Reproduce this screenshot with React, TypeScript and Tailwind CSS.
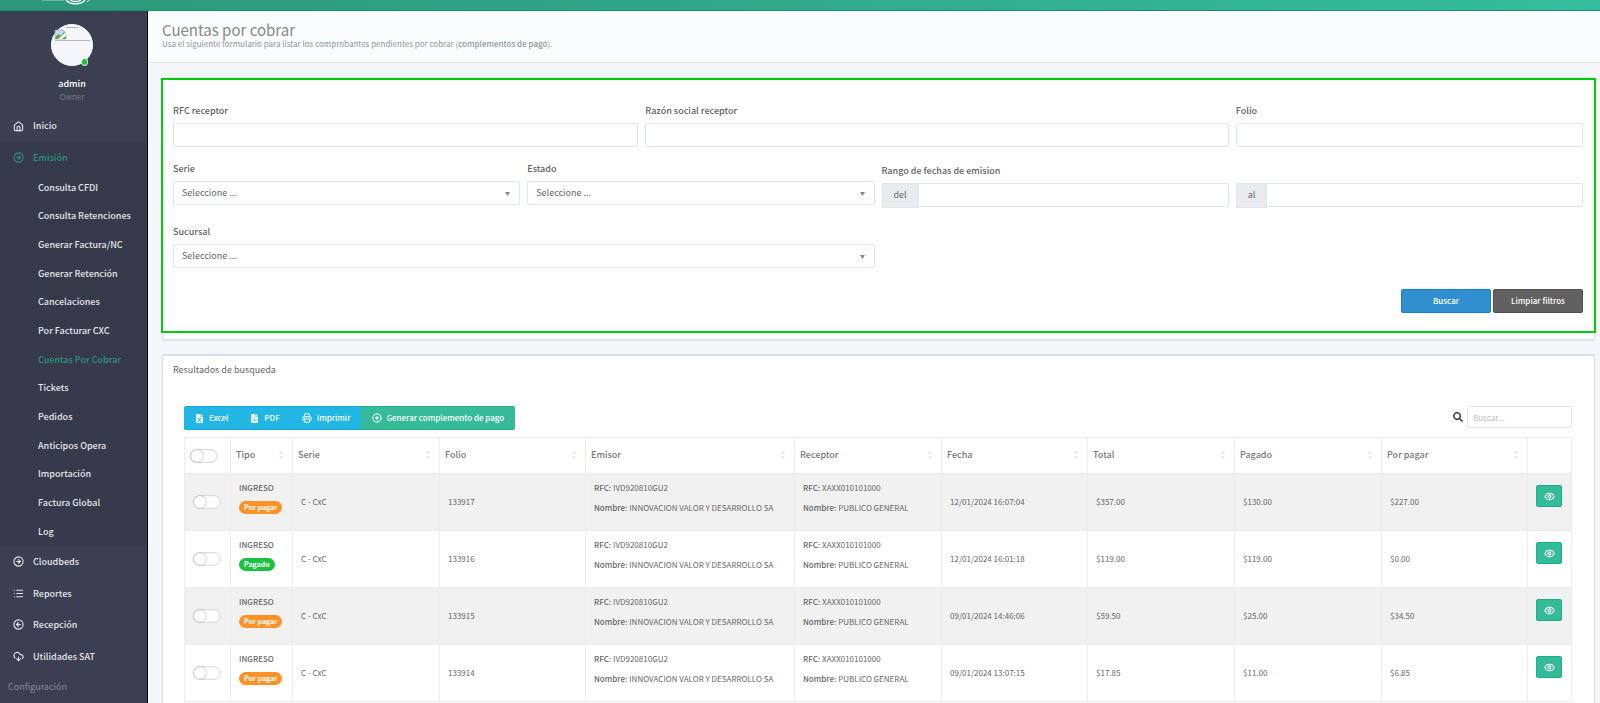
import type { ReactNode } from 'react';
import { House, CircleArrowRight, CircleArrowLeft, List, CloudDownload, Printer, CirclePlus, Eye } from 'lucide-react';
import { FaFileExcel, FaFilePdf, FaSearch } from 'react-icons/fa';

const SUB_LINKS = [
  'Consulta CFDI',
  'Consulta Retenciones',
  'Generar Factura/NC',
  'Generar Retención',
  'Cancelaciones',
  'Por Facturar CXC',
  'Cuentas Por Cobrar',
  'Tickets',
  'Pedidos',
  'Anticipos Opera',
  'Importación',
  'Factura Global',
  'Log',
];

const MAIN_LINKS = [
  { label: 'Cloudbeds', icon: CircleArrowRight },
  { label: 'Reportes', icon: List },
  { label: 'Recepción', icon: CircleArrowLeft },
  { label: 'Utilidades SAT', icon: CloudDownload },
];

const COLUMNS = [
  { label: 'Tipo', width: 'w-[62px]' },
  { label: 'Serie', width: 'w-[147px]' },
  { label: 'Folio', width: 'w-[146px]' },
  { label: 'Emisor', width: 'w-[209px]' },
  { label: 'Receptor', width: 'w-[147px]' },
  { label: 'Fecha', width: 'w-[146px]' },
  { label: 'Total', width: 'w-[147px]' },
  { label: 'Pagado', width: 'w-[147px]' },
  { label: 'Por pagar', width: 'w-[146px]' },
];

const ROWS = [
  { folio: '133917', paid: false, fecha: '12/01/2024 16:07:04', total: '$357.00', pagado: '$130.00', porPagar: '$227.00' },
  { folio: '133916', paid: true, fecha: '12/01/2024 16:01:18', total: '$119.00', pagado: '$119.00', porPagar: '$0.00' },
  { folio: '133915', paid: false, fecha: '09/01/2024 14:46:06', total: '$59.50', pagado: '$25.00', porPagar: '$34.50' },
  { folio: '133914', paid: false, fecha: '09/01/2024 13:07:15', total: '$17.85', pagado: '$11.00', porPagar: '$6.85' },
];

function Toggle({ label }: { label: string }) {
  return (
    <input
      type="checkbox"
      aria-label={label}
      className="block appearance-none w-7 h-[14px] rounded-full border border-[#dcdcdc] bg-white shadow-[inset_0_0_2px_#ddd] before:block before:w-3 before:h-3 before:rounded-full before:bg-white before:shadow-[0_0_2px_#888] before:content-['']"
    />
  );
}

function SelectBox({ id, label }: { id: string; label: string }) {
  return (
    <>
      <label htmlFor={id} className="block text-[9px] leading-3 font-medium text-[#5f5f5f]">{label}</label>
      <div className="relative mt-[6px]">
        <select id={id} className="block w-full h-6 appearance-none rounded-xs border border-[#dde6e9] bg-white px-2 text-[9px] text-[#666]">
          <option>Seleccione ...</option>
        </select>
        <svg viewBox="0 0 5 4" className="absolute right-[10px] top-[11px] w-[5px] h-1 fill-[#888]"><path d="M0 0h5L2.500 4z" /></svg>
      </div>
    </>
  );
}

function TextBox({ id, label }: { id: string; label: string }) {
  return (
    <>
      <label htmlFor={id} className="block text-[9px] leading-3 font-medium text-[#5f5f5f]">{label}</label>
      <input id={id} type="text" className="mt-[6px] block w-full h-6 rounded-xs border border-[#dde6e9] bg-white px-2 text-[9px]" />
    </>
  );
}

function DateBox({ id, label }: { id: string; label: string }) {
  return (
    <div className="flex items-start">
      <label htmlFor={id} className="h-[25px] px-[11px] text-[9px] leading-[22px] bg-[#e8ecef] border border-[#dde6e9] text-[#666]">{label}</label>
      <input id={id} type="text" className="h-6 min-w-0 flex-1 rounded-r-xs border border-l-0 border-[#dde6e9] bg-white px-2 text-[9px]" />
    </div>
  );
}

function ToolButton({ children }: { children: ReactNode }) {
  return (
    <button className="flex items-center gap-[5px] h-6 px-[11px] border-y border-[#13a9d8] bg-[#22b6e5] first:rounded-l-xs">
      {children}
    </button>
  );
}

function Sidebar() {
  return (
    <aside className="w-[148px] shrink-0 border-r border-black bg-[#3b3f51] text-[9px] font-medium text-[#e4e5e8]">
      {/* User */}
      <div className="flex flex-col items-center pt-[13px] pr-[3px]">
        <div className="relative">
          <svg viewBox="0 0 42 42" className="w-[42px] h-[42px]">
            <circle cx="21" cy="21" r="20.5" fill="#f5f6fa" stroke="#fff" />
            <path d="M15 3.5h12M4 16.5h35" stroke="#b5b5b5" />
            <path d="M4 6h8l3 3v6H4z" fill="#c3d6f2" stroke="#a5a5a5" strokeWidth=".6" />
            <path d="M4 15c1-4 4-6 6-3l3-4 2 1v6z" fill="#56a844" />
            <path d="M7 15 15 8v4l-4 3z" fill="#fff" />
          </svg>
          <span className="absolute right-[5px] bottom-0 w-[7px] h-2 rounded-full border border-white bg-[#19c13f]" />
        </div>
        <div className="mt-3 leading-3 text-white">admin</div>
        <div className="mt-px text-[8px] leading-3 font-normal text-[#777b8b]">Owner</div>
      </div>

      {/* Menu */}
      <nav>
        <a href="#inicio" className="mt-[7px] flex items-center h-8 pl-[13px] gap-[9px]">
          <House strokeWidth={2.4} className="w-[11px] h-[11px]" />Inicio
        </a>
        <div className="bg-[#363a4b]">
          <a href="#emision" className="flex items-center h-[31px] pl-[13px] gap-[9px] text-[#2c9378]">
            <CircleArrowRight strokeWidth={2.4} className="w-[11px] h-[11px]" />Emisión
          </a>
          <ul className="grid h-[373px]">
            {SUB_LINKS.map(label => (
              <li key={label} className="flex items-center pl-[38px]">
                <a href="#submenu" className={label === 'Cuentas Por Cobrar' ? 'text-[#2c9378]' : ''}>{label}</a>
              </li>
            ))}
          </ul>
        </div>
        <div className="grid h-[126px]">
          {MAIN_LINKS.map(({ label, icon: Icon }) => (
            <a key={label} href="#menu" className="flex items-center pl-[13px] gap-[9px]">
              <Icon strokeWidth={2.4} className="w-[11px] h-[11px]" />{label}
            </a>
          ))}
        </div>
        <div className="pl-2 pt-[7px] leading-4 font-normal text-[#868a99]">Configuración</div>
      </nav>
    </aside>
  );
}

function Filters() {
  return (
    <section className="mr-[5px] ml-[14px] mt-[14px] h-[264px] rounded-xs border border-[#dde3e8] border-b-2 bg-white">
      <form className="-mx-[2px] h-[255px] border-2 border-[#00cb0c] pl-[10px] pr-[11px] pt-[25px]">
        <div className="grid grid-cols-12 gap-x-[7px]">
          <div className="col-span-4"><TextBox id="rfc" label="RFC receptor" /></div>
          <div className="col-span-5"><TextBox id="razon" label="Razón social receptor" /></div>
          <div className="col-span-3"><TextBox id="folio" label="Folio" /></div>
        </div>
        <div className="mt-4 grid grid-cols-12 gap-x-[7px]">
          <div className="col-span-3"><SelectBox id="serie" label="Serie" /></div>
          <div className="col-span-3"><SelectBox id="estado" label="Estado" /></div>
          <fieldset className="col-span-6 pt-[2px]">
            <legend className="float-left w-full text-[9px] leading-3 font-medium text-[#5f5f5f]">Rango de fechas de emision</legend>
            <div className="clear-both grid grid-cols-2 gap-x-[7px] pt-[6px]">
              <DateBox id="del" label="del" />
              <DateBox id="al" label="al" />
            </div>
          </fieldset>
        </div>
        <div className="mt-[18px] grid grid-cols-12 gap-x-[7px]">
          <div className="col-span-6"><SelectBox id="sucursal" label="Sucursal" /></div>
        </div>
        <div className="mt-[21px] flex justify-end gap-[2px] text-[8px] font-medium text-white">
          <button type="submit" className="w-[90px] h-6 rounded-xs border border-[#1181c9] bg-[#308fce]">Buscar</button>
          <button type="reset" className="w-[90px] h-6 rounded-xs border border-[#4d4d4d] bg-[#616161]">Limpiar filtros</button>
        </div>
      </form>
    </section>
  );
}

function Results() {
  return (
    <section className="mr-[5px] ml-[14px] mt-[13px] rounded-xs border border-t-2 border-[#d5e0e6] bg-white px-[10px] pb-8">
      <h2 className="pt-2 text-[9px] leading-3 text-[#666]">Resultados de busqueda</h2>
      <div className="pl-[11px] pr-3 pt-[30px]">
        <div className="flex items-start justify-between">
          <div className="flex text-[8px] font-medium text-white">
            <ToolButton><FaFileExcel className="w-[9px] h-[9px]" />Excel</ToolButton>
            <ToolButton><FaFilePdf className="w-[9px] h-[9px]" />PDF</ToolButton>
            <ToolButton><Printer strokeWidth={2.4} className="w-[10px] h-[10px]" />Imprimir</ToolButton>
            <button className="flex items-center gap-1 h-6 px-[11px] rounded-r-xs border-y border-[#22b08c] bg-[#36bb99]">
              <CirclePlus strokeWidth={2.4} className="w-[10px] h-[10px]" />Generar complemento de pago
            </button>
          </div>
          <label className="flex items-center gap-1">
            <FaSearch className="w-[10px] h-[10px] text-[#444]" />
            <input type="search" placeholder="Buscar..." className="w-[105px] h-[22px] rounded-xs border border-[#e3e5e7] px-[5px] text-[8px] placeholder:text-[#bbb]" />
          </label>
        </div>

        <table className="mt-[7px] w-full table-fixed border-collapse text-left text-[8px] text-[#666]">
          <thead>
            <tr className="h-9 text-[9px] text-[#777]">
              <th className="w-[46px] border border-[#ececec] pl-[5px]"><Toggle label="Seleccionar todos" /></th>
              {COLUMNS.map(({ label, width }) => (
                <th key={label} className={`${width} border border-[#ececec] pb-px pl-[5px] pr-[9px] font-medium`}>
                  <div className="flex items-center justify-between">
                    {label}
                    <svg viewBox="0 0 4 8" className="w-1 h-2 fill-[#e2e2e2]"><path d="M0 2.500 2 0l2 2.500zM0 5.500h4L2 8z" /></svg>
                  </div>
                </th>
              ))}
              <th className="border border-[#ececec]" />
            </tr>
          </thead>
          <tbody>
            {ROWS.map(row => (
              <tr key={row.folio} className="h-[57px] odd:bg-[#f1f1f1] *:border *:border-[#ececec] *:pl-2 *:pb-px">
                <td><Toggle label={`Seleccionar ${row.folio}`} /></td>
                <td className="align-top pt-2">
                  <div className="leading-3 font-medium">INGRESO</div>
                  <span className={`mt-[7px] block w-fit rounded-full px-[5px] text-[7px] leading-[13px] font-bold text-white ${row.paid ? 'bg-[#1bc242]' : 'bg-[#ff9226]'}`}>
                    {row.paid ? 'Pagado' : 'Por pagar'}
                  </span>
                </td>
                <td>C - CxC</td>
                <td>{row.folio}</td>
                <td className="align-top pt-2 leading-3 whitespace-nowrap">
                  <p><b className="font-medium">RFC:</b> IVD920810GU2</p>
                  <p className="mt-2"><b className="font-medium">Nombre:</b> INNOVACION VALOR Y DESARROLLO SA</p>
                </td>
                <td className="align-top pt-2 leading-3 whitespace-nowrap">
                  <p><b className="font-medium">RFC:</b> XAXX010101000</p>
                  <p className="mt-2"><b className="font-medium">Nombre:</b> PUBLICO GENERAL</p>
                </td>
                <td>{row.fecha}</td>
                <td>{row.total}</td>
                <td>{row.pagado}</td>
                <td>{row.porPagar}</td>
                <td className="align-top pt-[11px]">
                  <button aria-label="Ver" className="flex items-center justify-center w-[26px] h-[22px] rounded-xs border border-[#15b38d] bg-[#36bb99] text-white">
                    <Eye strokeWidth={2.4} className="w-[11px] h-[11px]" />
                  </button>
                </td>
              </tr>
            ))}
          </tbody>
        </table>
      </div>
    </section>
  );
}

export default function App() {
  return (
    <div className="flex flex-col h-screen overflow-hidden bg-[#f5f6fa] font-['Noto_Sans_CJK_SC','Noto_Sans',sans-serif]">
      <header className="h-[11px] shrink-0 border-b border-[#12916f] bg-linear-to-r from-[#2b9879] to-[#36bd9b]">
        <svg viewBox="0 0 50 6" className="ml-[40px] w-[50px] h-[6px]" fill="none" stroke="#fff">
          <path d="M2 .3h22" stroke="#8fc9b8" strokeWidth=".8" />
          <path d="M26 0c4 5 15 5 19 0" strokeWidth="1.300" />
          <path d="M30 0c3 2 8 2 11 0" strokeWidth="1.300" />
          <path d="M47 2 49 0" />
        </svg>
      </header>
      <div className="flex flex-1 min-h-0">
        <Sidebar />
        <main className="flex-1 min-w-0">
          <div className="h-[52px] border-b border-[#dbe5ee] bg-[#fafcfe] pl-[14px] pt-[10px]">
            <h1 className="text-[15px] leading-[18px] text-[#888]">Cuentas por cobrar</h1>
            <p className="text-[8px] leading-[10px] text-[#8d979f]">
              Usa el siguiente formulario para listar los comprobantes pendientes por cobrar (<b className="font-medium">complementos de pago</b>).
            </p>
          </div>
          <Filters />
          <Results />
        </main>
      </div>
    </div>
  );
}
